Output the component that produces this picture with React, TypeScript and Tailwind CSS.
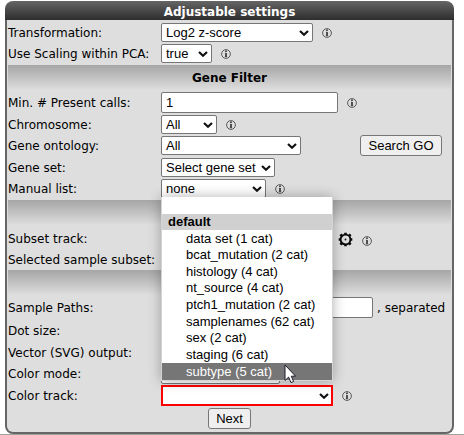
import type { ReactNode } from "react";

const labelFont = "font-['DejaVu_Sans',Verdana,sans-serif]";
const controlFont = "font-['Liberation_Sans',Arial,sans-serif]";

function Info() {
  return (
    <svg className="ml-[9px] size-[10px] shrink-0" viewBox="0 0 10 10" role="img" aria-label="Info">
      <circle cx="5" cy="5" r="4.4" fill="none" stroke="#3a3a3a" strokeWidth="0.8" />
      <path d="M5 1.6v1.4M5 4v4" fill="none" stroke="#222" strokeWidth="1.5" />
      <path d="M4 4.2h1M3.8 7.8h2.4" fill="none" stroke="#444" strokeWidth="0.6" />
    </svg>
  );
}

function Gear() {
  return (
    <svg className="block size-[15px] shrink-0" viewBox="0 0 15 15" aria-hidden="true">
      <circle cx="7.5" cy="7.5" r="4.9" fill="none" stroke="#0a0a0a" strokeWidth="1.9" />
      <path
        d="M7.5 0.7v1.6M7.5 12.7v1.6M0.7 7.5h1.6M12.7 7.5h1.6M2.4 2.4l1.4 1.4M11.2 11.2l1.4 1.4M2.4 12.6l1.4-1.4M11.2 3.8l1.4-1.4"
        stroke="#0a0a0a"
        strokeWidth="2.6"
      />
      <circle cx="7.5" cy="7.5" r="0.9" fill="#111" />
    </svg>
  );
}

function Select({ id, value, width, box = "h-[19px] border border-[#767676] rounded-xs pl-1" }: { id: string; value: string; width: string; box?: string }) {
  return (
    <span className={`relative block shrink-0 ${width}`}>
      <select
        id={id}
        defaultValue={value}
        className={`block w-full appearance-none bg-white text-[13px] leading-4 text-black outline-none ${controlFont} ${box}`}
      >
        <option value={value}>{value}</option>
      </select>
      <svg className="pointer-events-none absolute inset-y-0 right-1 my-auto h-[6px] w-[10px]" viewBox="0 0 10 6" aria-hidden="true">
        <path d="M1 1l4 3.7L9 1" fill="none" stroke="#111" strokeWidth="2.2" />
      </svg>
    </span>
  );
}

function Row({ label, htmlFor, height, children }: { label: string; htmlFor: string; height: string; children?: ReactNode }) {
  return (
    <div className={`flex items-center ${height}`}>
      <label htmlFor={htmlFor} className="w-[153px] shrink-0 whitespace-nowrap">
        {label}
      </label>
      {children}
    </div>
  );
}

function Band({ title, margin }: { title?: string; margin?: string }) {
  return (
    <h3 className={`flex h-[25px] items-center justify-center bg-linear-to-b from-[#a6a6a6] to-[#dedede] font-bold ${margin ?? ""}`}>
      {title}
    </h3>
  );
}

const field = `border border-[#767676] rounded-xs bg-white pl-1 text-[13px] leading-4 text-black outline-none ${controlFont}`;
const button = `rounded-[3px] border border-[#767676] bg-[#efefef] text-[13px] leading-4 text-black ${controlFont}`;

const tracks = [
  "data set (1 cat)",
  "bcat_mutation (2 cat)",
  "histology (4 cat)",
  "nt_source (4 cat)",
  "ptch1_mutation (2 cat)",
  "samplenames (62 cat)",
  "sex (2 cat)",
  "staging (6 cat)",
  "subtype (5 cat)",
];

function TrackMenu() {
  return (
    <div
      role="listbox"
      aria-label="Color track"
      className={`absolute bottom-full left-0 z-10 mb-1 grid h-[184px] w-full auto-rows-fr border border-t-0 border-[#d4d4d4] bg-white text-[13px] leading-4 shadow-[0_0_12px_rgba(0,0,0,0.3)] ${controlFont}`}
    >
      <div role="option" aria-selected="false" aria-label="none" />
      <div className="flex items-center bg-[#d0d0d0] pl-1.5 font-bold">default</div>
      {tracks.map((t) => {
        const on = t.startsWith("subtype");
        return (
          <div
            key={t}
            role="option"
            aria-selected={on}
            className={`flex items-center pl-6 whitespace-nowrap ${on ? "bg-[#767676] text-white" : ""}`}
          >
            {t}
          </div>
        );
      })}
      <svg className="absolute -bottom-1 left-[122px] h-5 w-3" viewBox="0 0 12 20" aria-hidden="true">
        <path d="M1 1v15.5l3.6-3.4 2.4 5.5 2.6-1.1-2.3-5.3h4.3z" fill="#fff" stroke="#1c1c28" strokeWidth="1" />
      </svg>
    </div>
  );
}

export default function App() {
  return (
    <main className={`border-b border-[#a0a0a0] bg-white pt-px text-[12px] leading-4 text-black ${labelFont}`}>
      <form className="mr-[10px] ml-[5px]" onSubmit={(e) => e.preventDefault()}>
        <h2 className="flex h-[19px] items-center justify-center rounded-t-lg bg-linear-to-b from-[#666] to-[#2e2e2e] pt-0.5 font-bold text-white">
          Adjustable settings
        </h2>
        <div className="rounded-b-lg border-2 border-t-0 border-[#666] bg-[#dedede] px-px pt-0.5 pb-0.5">
          <Row label="Transformation:" htmlFor="transformation" height="h-[21px]">
            <Select id="transformation" value="Log2 z-score" width="w-[152px]" />
            <Info />
          </Row>
          <Row label="Use Scaling within PCA:" htmlFor="scaling" height="h-[21px]">
            <Select id="scaling" value="true" width="w-[51px]" />
            <Info />
          </Row>
          <Band title="Gene Filter" margin="mt-px" />
          <Row label="Min. # Present calls:" htmlFor="calls" height="h-[25px]">
            <input id="calls" defaultValue="1" className={`h-[21px] w-[177px] ${field}`} />
            <Info />
          </Row>
          <Row label="Chromosome:" htmlFor="chromosome" height="h-[19px]">
            <Select id="chromosome" value="All" width="w-[56px]" />
            <Info />
          </Row>
          <Row label="Gene ontology:" htmlFor="ontology" height="h-[23px]">
            <Select id="ontology" value="All" width="w-[140px]" />
            <button type="button" className={`mr-[9px] ml-auto h-[21px] w-[82px] ${button}`}>
              Search GO
            </button>
          </Row>
          <Row label="Gene set:" htmlFor="geneset" height="h-[21px]">
            <Select id="geneset" value="Select gene set" width="w-[114px]" />
          </Row>
          <Row label="Manual list:" htmlFor="manual" height="h-[21px]">
            <Select id="manual" value="none" width="w-[105px]" />
            <Info />
          </Row>
          <Band margin="mt-px mb-[3px]" />
          <Row label="Subset track:" htmlFor="subset" height="h-[22px]">
            <Select id="subset" value="" width="w-[152px]" />
            <button type="button" aria-label="Track settings" className="ml-[25px]">
              <Gear />
            </button>
            <span className="pt-1">
              <Info />
            </span>
          </Row>
          <Row label="Selected sample subset:" htmlFor="selected" height="h-5">
            <output id="selected" />
          </Row>
          <Band />
          <Row label="Sample Paths:" htmlFor="paths" height="h-[25px]">
            <input id="paths" className={`h-[21px] w-[212px] ${field}`} />
            <span className="ml-1 whitespace-nowrap">, separated</span>
          </Row>
          <Row label="Dot size:" htmlFor="dot" height="h-[21px]">
            <input id="dot" className={`h-[19px] w-[152px] ${field}`} />
          </Row>
          <Row label="Vector (SVG) output:" htmlFor="vector" height="h-[23px]">
            <Select id="vector" value="" width="w-[51px]" />
          </Row>
          <Row label="Color mode:" htmlFor="mode" height="h-5">
            <Select id="mode" value="" width="w-[119px]" />
          </Row>
          <Row label="Color track:" htmlFor="track" height="h-[23px]">
            <div className="relative">
              <Select id="track" value="" width="w-[172px]" box="h-[21px] border-2 border-[#f00]" />
              <TrackMenu />
            </div>
            <Info />
          </Row>
          <div className="flex h-[23px] items-center justify-center">
            <button type="submit" className={`h-[21px] w-[43px] ${button}`}>
              Next
            </button>
          </div>
        </div>
      </form>
    </main>
  );
}
